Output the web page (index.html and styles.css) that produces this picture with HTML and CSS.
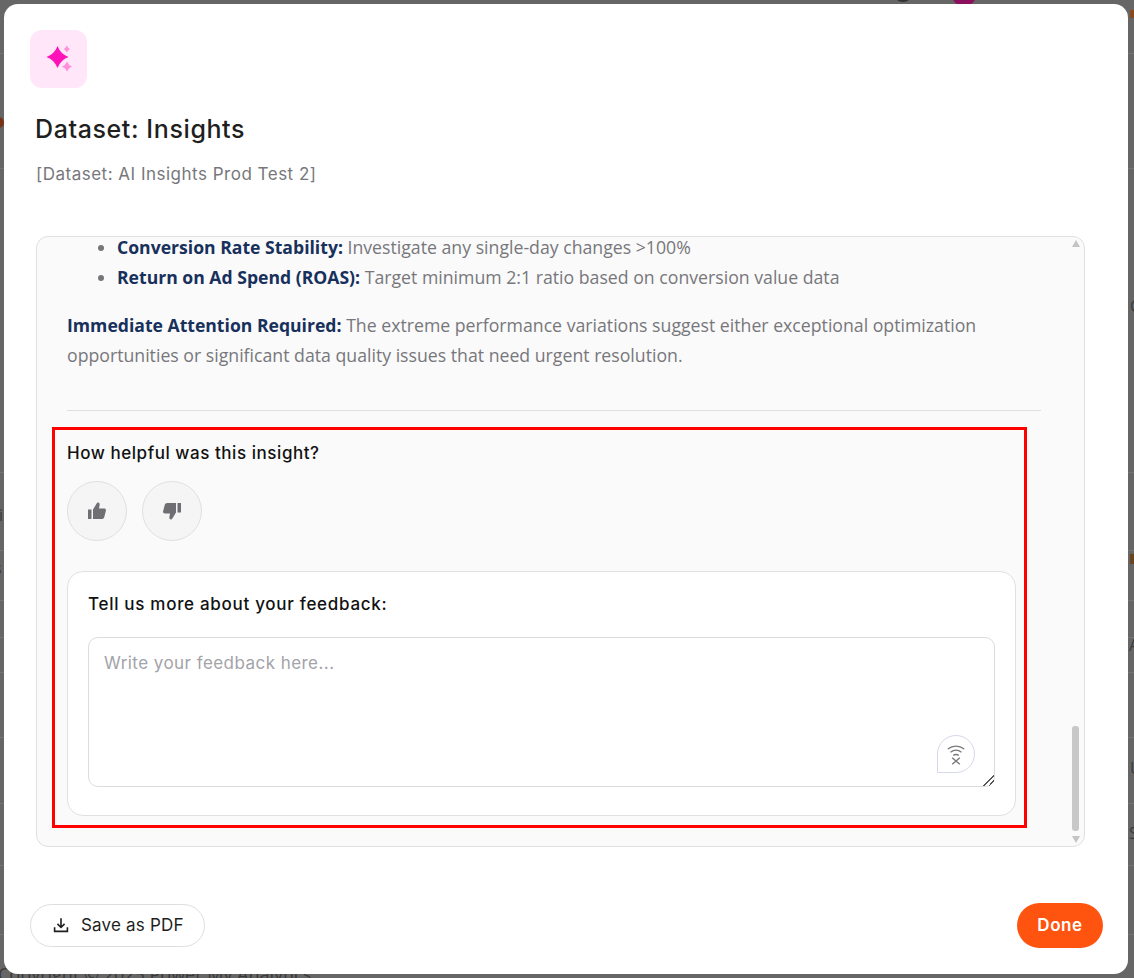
FILE: index.html
```html
<!DOCTYPE html>
<html lang="en">
<head>
    <meta charset="UTF-8">
    <meta name="viewport" content="width=device-width, initial-scale=1.0">
    <title>Dataset: Insights</title>
    <link rel="stylesheet" href="styles.css">
</head>
<body>
    <div class="backdrop">
        <span class="bg-line line-1"></span>
        <span class="bg-line line-2"></span>
        <span class="bg-line line-3"></span>
        <span class="bg-line line-4"></span>
        <span class="bg-line line-5"></span>
        <span class="bg-line line-6"></span>
        <span class="bg-line line-7"></span>
        <span class="bg-line line-8"></span>
        <span class="bg-line line-9"></span>
        <span class="bg-line line-10"></span>
        <span class="bg-line line-11"></span>
        <span class="bg-avatar"></span>
        <span class="bg-user"></span>
        <span class="bg-dot"></span>
        <span class="bg-tag"></span>
        <span class="bg-bar"></span>
        <span class="bg-letter letter-c">C</span>
        <span class="bg-letter letter-a">A</span>
        <span class="bg-letter letter-u">U</span>
        <span class="bg-letter letter-e">S</span>
        <span class="bg-letter letter-i">i</span>
        <span class="bg-letter letter-s">s</span>
        <span class="bg-copy">Copyright © 2025 Power My Analytics</span>
    </div>
    <div class="modal">
        <div class="icon-tile">
            <svg width="30" height="30" viewBox="0 0 30 30">
                <path fill="#ff12b8" d="M13.500 2Q16.500 10 24.500 13 16.500 16 13.500 24 10.500 16 2.500 13 10.500 10 13.500 2z"/>
                <path fill="#ff8fdc" d="M22.800 1.500Q23.800 4 26 5 23.800 6 22.800 8.500 21.800 6 19.600 5 21.800 4 22.800 1.500z"/>
                <path fill="#ff8fdc" d="M23 17.500Q24.300 21.200 28 22.500 24.300 23.800 23 27.500 21.700 23.800 18 22.500 21.700 21.200 23 17.500z"/>
            </svg>
        </div>
        <h1 class="title">Dataset: Insights</h1>
        <p class="subtitle">[Dataset: AI Insights Prod Test 2]</p>

        <div class="panel">
            <div class="panel-content">
                <ul class="points">
                    <li><strong>Conversion Rate Stability:</strong> Investigate any single-day changes &gt;100%</li>
                    <li><strong>Return on Ad Spend (ROAS):</strong> Target minimum 2:1 ratio based on conversion value data</li>
                </ul>
                <p class="summary"><strong>Immediate Attention Required:</strong> The extreme performance variations suggest either exceptional optimization opportunities or significant data quality issues that need urgent resolution.</p>
                <hr class="divider">
                <div class="feedback">
                    <div class="question">How helpful was this insight?</div>
                    <div class="votes">
                        <button class="vote" type="button" aria-label="Helpful">
                            <svg width="20" height="20" viewBox="0 0 20 20"><path fill="#6f6f73" d="M1 8.500h3.500V18H1zM6 8.500l3.800-6.300c.3-.6 1-.9 1.600-.6 1 .4 1.500 1.400 1.200 2.500L12 7.500h5.200c1.200 0 2 1.100 1.700 2.200l-1.700 6.500c-.3 1.100-1.300 1.800-2.400 1.800H6z"/></svg>
                        </button>
                        <button class="vote" type="button" aria-label="Not helpful">
                            <svg width="20" height="20" viewBox="0 0 20 20"><path fill="#6f6f73" d="M15.500 2H19v9.500h-3.500zM14 11.500l-3.800 6.300c-.3.600-1 .9-1.600.6-1-.4-1.500-1.400-1.200-2.500l.6-3.400H2.800c-1.200 0-2-1.100-1.700-2.200l1.700-6.500C3.100 2.700 4.100 2 5.200 2H14z"/></svg>
                        </button>
                    </div>
                    <div class="feedback-card">
                        <label class="feedback-label" for="feedback">Tell us more about your feedback:</label>
                        <div class="field">
                            <textarea id="feedback" class="feedback-input" placeholder="Write your feedback here..."></textarea>
                            <span class="assist">
                                <svg width="22" height="24" viewBox="0 0 20 22" fill="none" stroke="#77777b" stroke-width="1.200">
                                    <path d="M2.500 6.500c4.500-3.600 10.500-3.600 15 0"/>
                                    <path d="M5 9.500c3-2.400 7-2.400 10 0"/>
                                    <path d="M7.500 12.300c1.500-1 3.500-1 5 0"/>
                                    <path d="M6.500 14.500l7 6M13.500 14.500l-7 6"/>
                                </svg>
                            </span>
                        </div>
                    </div>
                </div>
            </div>
            <div class="scrollbar">
                <span class="arrow-up"></span>
                <span class="thumb"></span>
                <span class="arrow-down"></span>
            </div>
        </div>

        <div class="footer">
            <button class="btn-save" type="button">
                <svg width="16" height="16" viewBox="0 0 18 18" fill="none" stroke="#1f1f1f" stroke-width="1.800">
                    <path d="M9 1.500v10M5 7.800l4 4 4-4"/>
                    <path d="M1.800 11.500v4.700h14.400v-4.700"/>
                </svg>
                Save as PDF
            </button>
            <button class="btn-done" type="button">Done</button>
        </div>
    </div>
</body>
</html>
```

FILE: styles.css
```css
html, body {
    height: 100%;
}
body {
    margin: 0;
    background-color: #666666;
    font-family: "Open Sans", "Noto Sans", sans-serif;
    overflow: hidden;
    position: relative;
    box-sizing: border-box;
    padding: 4px 6px 4px 4px;
}
.backdrop span {
    position: absolute;
}
.bg-line {
    left: 0;
    right: 0;
    height: 1px;
    background: #747474;
}
.line-1 { top: 53px; }
.line-2 { top: 168px; }
.line-3 { top: 472px; }
.line-4 { top: 550px; }
.line-5 { top: 600px; }
.line-6 { top: 637px; }
.line-7 { top: 672px; }
.line-8 { top: 737px; }
.line-9 { top: 803px; }
.line-10 { top: 865px; }
.line-11 { top: 934px; }
.bg-avatar {
    left: 951px;
    top: -20px;
    width: 26px;
    height: 26px;
    border-radius: 50%;
    background: #8c0f5e;
}
.bg-user {
    left: 893px;
    top: -18px;
    width: 20px;
    height: 20px;
    border-radius: 50%;
    background: #333333;
}
.bg-dot {
    left: -8px;
    top: 117px;
    width: 12px;
    height: 11px;
    border-radius: 50%;
    background: #7a3214;
}
.bg-tag {
    left: 1130px;
    top: 10px;
    width: 4px;
    height: 8px;
    background: #8a4a20;
}
.bg-bar {
    left: 1130px;
    top: 554px;
    width: 4px;
    height: 10px;
    background: #6b4420;
}
.bg-letter {
    font-size: 16px;
    line-height: 20px;
    color: #3c3c3c;
}
.letter-c { left: 1130px; top: 296px; }
.letter-a { left: 1129px; top: 635px; }
.letter-u { left: 1130px; top: 758px; }
.letter-e { left: 1129px; top: 823px; }
.letter-i { left: -1px; top: 505px; }
.letter-s { left: -6px; top: 558px; }
.bg-copy {
    left: -2px;
    top: 962px;
    font-size: 18px;
    line-height: 24px;
    color: #3a3a3a;
    white-space: nowrap;
}
.modal {
    position: relative;
    height: 970px;
    box-sizing: border-box;
    padding: 26px;
    background: #ffffff;
    border-radius: 14px;
    display: flex;
    flex-direction: column;
}
.icon-tile {
    width: 57px;
    height: 58px;
    border-radius: 12px;
    background: #ffe6f8;
    display: flex;
    align-items: center;
    justify-content: center;
}
.title {
    margin: 25px 0 0 5px;
    font-family: Inter, sans-serif;
    font-size: 25px;
    line-height: 32px;
    font-weight: 500;
    color: #1f1f1f;
    letter-spacing: 0.6px;
}
.subtitle {
    margin: 16px 0 0 6px;
    font-family: Inter, sans-serif;
    font-size: 17px;
    line-height: 26px;
    color: #77777b;
    letter-spacing: 0.5px;
}
.panel {
    position: relative;
    margin: 49px 17px 0 6px;
    height: 611px;
    box-sizing: border-box;
    background: #fafafa;
    border: 1px solid #e0e0e0;
    border-radius: 12px;
    overflow: hidden;
}
.panel-content {
    padding: 0 43px 0 30px;
    font-size: 17.7px;
    line-height: 30px;
    color: #77777b;
}
.panel-content strong {
    font-size: 17.6px;
    color: #17305c;
    font-weight: 700;
}
.points {
    margin: -5px 0 0;
    padding-left: 50px;
}
.summary {
    margin: 18px 0 0;
}
.divider {
    margin: 40px 0 0;
    border: none;
    border-top: 1px solid #e0e0e0;
}
.feedback {
    margin: 16px 14px 0 -15px;
    box-sizing: border-box;
    height: 401px;
    border: 3px solid #ff0000;
    padding: 10px 8px 0 12px;
}
.question {
    font-family: Inter, sans-serif;
    font-size: 17px;
    line-height: 26px;
    font-weight: 500;
    color: #111111;
    letter-spacing: 0.55px;
}
.votes {
    display: flex;
    gap: 15px;
    margin-top: 15px;
}
.vote {
    width: 60px;
    height: 60px;
    border-radius: 50%;
    border: 1px solid #e0e0e0;
    background: #f5f5f5;
    padding: 0;
    display: flex;
    align-items: center;
    justify-content: center;
}
.feedback-card {
    margin-top: 30px;
    height: 245px;
    box-sizing: border-box;
    background: #ffffff;
    border: 1px solid #e0e0e0;
    border-radius: 16px;
    padding: 20px;
}
.feedback-label {
    display: block;
    font-family: Inter, sans-serif;
    font-size: 17px;
    line-height: 24px;
    font-weight: 500;
    color: #111111;
    letter-spacing: 0.7px;
}
.field {
    position: relative;
    margin-top: 21px;
}
.feedback-input {
    display: block;
    width: 100%;
    height: 150px;
    box-sizing: border-box;
    border: 1px solid #dcdcdc;
    border-radius: 10px;
    padding: 12px 15px;
    background: #ffffff;
    font-family: Inter, sans-serif;
    font-size: 17px;
    line-height: 26px;
    letter-spacing: 0.45px;
    outline: none;
}
.feedback-input::placeholder {
    color: #a3a3a8;
}
.feedback-input::-webkit-resizer {
    background: linear-gradient(135deg, transparent 62%, #555555 62% 68%, transparent 68% 80%, #555555 80% 86%, transparent 86%);
}
.assist {
    position: absolute;
    right: 20px;
    bottom: 14px;
    width: 36px;
    height: 36px;
    border: 1px solid #d5d8e8;
    border-radius: 50% 50% 50% 0;
    background: #ffffff;
    display: flex;
    align-items: center;
    justify-content: center;
}
.scrollbar {
    position: absolute;
    top: 0;
    right: 0;
    bottom: 0;
    width: 17px;
    display: flex;
    flex-direction: column;
    align-items: center;
}
.arrow-up {
    margin-top: 3px;
    border-left: 4px solid transparent;
    border-right: 4px solid transparent;
    border-bottom: 7px solid #c4c4c4;
}
.thumb {
    margin-top: 479px;
    width: 7px;
    height: 105px;
    border-radius: 3px;
    background: #c8c8c8;
}
.arrow-down {
    margin-top: 5px;
    border-left: 4px solid transparent;
    border-right: 4px solid transparent;
    border-top: 7px solid #c4c4c4;
}
.footer {
    display: flex;
    justify-content: space-between;
    align-items: center;
    margin-top: 56px;
}
.btn-save {
    height: 43px;
    width: 175px;
    box-sizing: border-box;
    border: 1px solid #dedede;
    border-radius: 22px;
    background: #ffffff;
    display: flex;
    align-items: center;
    gap: 12px;
    padding: 0 0 2px 22px;
    font-family: Inter, sans-serif;
    font-size: 17px;
    letter-spacing: 0.2px;
    color: #1f1f1f;
}
.btn-done {
    width: 86px;
    height: 45px;
    margin-right: -1px;
    border: none;
    border-radius: 23px;
    padding: 0 0 2px;
    background: #ff5310;
    color: #ffffff;
    font-family: Inter, sans-serif;
    font-size: 17px;
    font-weight: 600;
    letter-spacing: 0.6px;
}
```
